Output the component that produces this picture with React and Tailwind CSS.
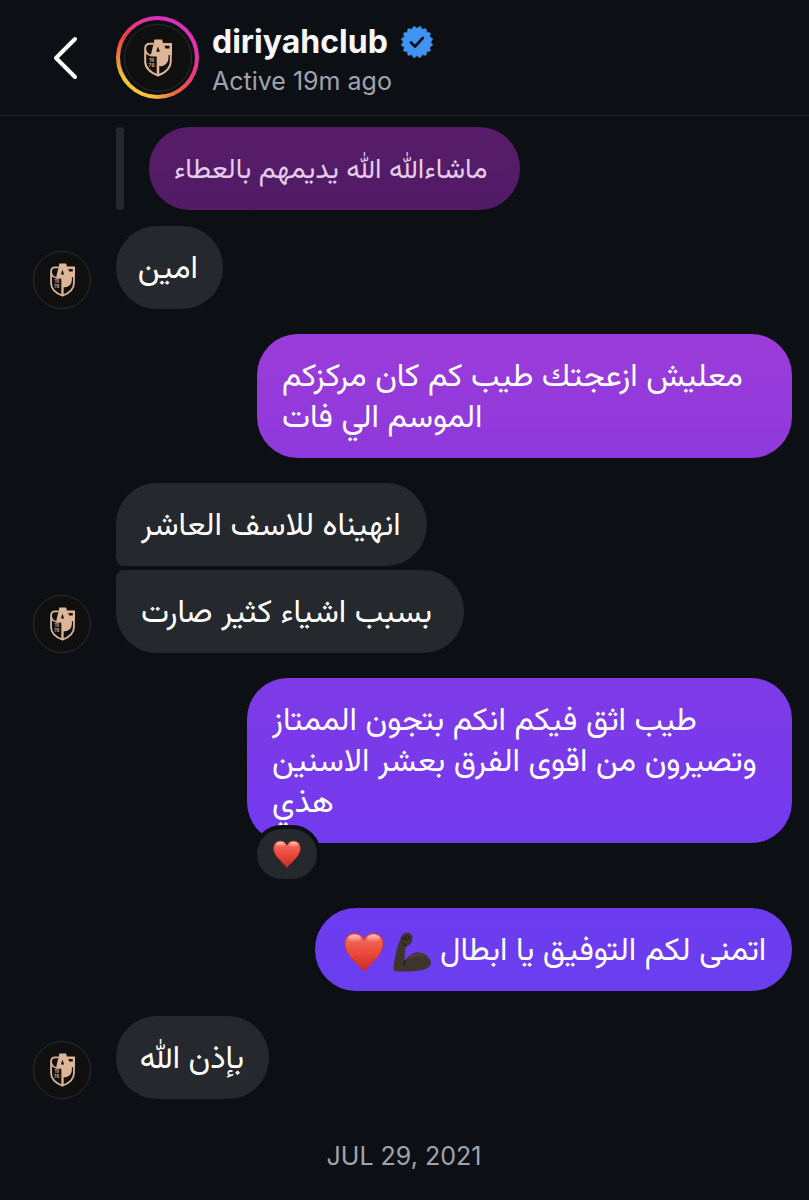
const ARABIC = "font-['Vazirmatn','DejaVu_Sans',sans-serif]";

// Messages of the thread, oldest first
const thread = [
  {
    id: 1,
    from: 'club',
    quote: 'ماشاءالله الله يديمهم بالعطاء',
    quoteSize: 'w-[371px]',
    items: [{ text: 'امين', size: 'w-[107px]' }],
    gap: 'mt-4',
  },
  {
    id: 2,
    from: 'me',
    items: [{
      text: 'معليش ازعجتك طيب كم كان مركزكم\nالموسم الي فات',
      size: 'w-[535px]',
      tone: 'from-[#9b3cd9] to-[#8e39dc]',
    }],
    gap: 'mt-[25px]',
  },
  {
    id: 3,
    from: 'club',
    items: [
      { text: 'انهيناه للاسف العاشر', size: 'w-[311px]' },
      { text: 'بسبب اشياء كثير صارت', size: 'w-[348px]' },
    ],
    gap: 'mt-[25px]',
  },
  {
    id: 4,
    from: 'me',
    items: [{
      text: 'طيب اثق فيكم انكم بتجون الممتاز\nوتصيرون من اقوى الفرق بعشر الاسنين\nهذي',
      size: 'w-[545px]',
      tone: 'from-[#7f3ae6] to-[#723aef]',
      reaction: true,
    }],
    gap: 'mt-[25px]',
  },
  {
    id: 5,
    from: 'me',
    items: [{
      text: 'اتمنى لكم التوفيق يا ابطال',
      size: 'w-[477px]',
      tone: 'from-[#6d3cf0] to-[#6a3eee]',
      emojis: true,
    }],
    gap: 'mt-[65px]',
  },
  {
    id: 6,
    from: 'club',
    items: [{ text: 'بإذن الله', size: 'w-[153px]' }],
    gap: 'mt-[25px]',
  },
];

function Heart({ className }) {
  return (
    <svg viewBox="0 0 40 40" className={className} role="img" aria-label="red heart">
      <defs>
        <linearGradient id="heartFill" x1="0" y1="0" x2="0" y2="1">
          <stop offset="0" stopColor="#f4705f" />
          <stop offset="0.45" stopColor="#ee4f40" />
          <stop offset="1" stopColor="#c9281f" />
        </linearGradient>
        <linearGradient id="heartShine" x1="0" y1="0" x2="0" y2="1">
          <stop offset="0" stopColor="#fff" stopOpacity="0.6" />
          <stop offset="1" stopColor="#fff" stopOpacity="0" />
        </linearGradient>
      </defs>
      <path d="M20 39.500C17 35.500 11 30.500 7 25.500C3.500 21 1 17 1 12C1 5.500 5 1.500 10.500 1.500C15 1.500 18.500 4 20 8C21.500 4 25 1.500 29.500 1.500C35 1.500 39 5.500 39 12C39 17 36.500 21 33 25.500C29 30.500 23 35.500 20 39.500Z" fill="url(#heartFill)" stroke="#c9342b" strokeWidth="0.8" />
      <ellipse cx="10.500" cy="6.500" rx="6.500" ry="4" fill="url(#heartShine)" />
      <ellipse cx="29.500" cy="6.500" rx="6.500" ry="4" fill="url(#heartShine)" />
    </svg>
  );
}

function Biceps({ className }) {
  return (
    <svg viewBox="0 0 40 40" className={className} role="img" aria-label="flexed biceps">
      <path d="M2 39C1 35 2.500 29 3.500 23C4.500 17 6.500 11 8.500 7C9.500 3 12 0.500 15 0.800C18.500 0.500 21 3 20.500 7C20.500 10.500 18 13.500 14.500 14C12.500 18 12.500 24 13 28.500C17 23 23 19.500 28 20.500C34 21.500 39 26.500 39 31C38.500 36 32 38.500 24 39C16 40 7 39.500 2 39Z" fill="#3f352f" />
      <path d="M13 28.500C12.800 30.500 13 31.500 11.500 33M10 6.500C12 5 13.500 6 15 8M15.500 3.500L17.500 6.500M14.500 14C12.500 13.500 11.500 12 11 11" fill="none" stroke="#211a16" strokeWidth="1.200" strokeLinecap="round" />
      <path d="M18 25.500C22 22.500 27 22 31 24" fill="none" stroke="#51453e" strokeWidth="1.500" strokeLinecap="round" />
    </svg>
  );
}

function Crest({ className }) {
  return (
    <svg viewBox="0 0 28 38" className={className} aria-hidden="true">
      <path d="M9.500 4.800H6C3 4.800 1.200 6.500 1.200 9.500V22.500C1.200 29.500 7.500 34 14 36.500C20.500 34 26.800 29.500 26.800 22.500V15" fill="none" stroke="#dcb696" strokeWidth="2" />
      <path d="M1.500 11C2 14 3.500 15.800 7 16.300" fill="none" stroke="#dcb696" strokeWidth="1.600" />
      <path fillRule="evenodd" d="M10.500 0.500H18L19 4H28V16H24.500V18.500C24.500 23.500 21.500 26.700 17 27.200L15.300 27V36.500H12.700V17.500H6.500ZM14 7.500L15.800 12.800H12.200ZM20.500 6.800H25.500V9.500H21.500Z" fill="#dcb696" />
      <text x="7.600" y="22.500" textAnchor="middle" fontSize="5" fontWeight="600" fill="#dcb696">19</text>
      <text x="7.600" y="27.500" textAnchor="middle" fontSize="5" fontWeight="600" fill="#dcb696">76</text>
    </svg>
  );
}

function Avatar() {
  return (
    <div className="flex h-[58px] w-[58px] shrink-0 items-center justify-center rounded-full border border-[#2e2d2d] bg-[#100f0f]">
      <Crest className="h-[34px] w-[25px]" />
    </div>
  );
}

function VerifiedBadge() {
  const points = Array.from({ length: 32 }, (_, i) => {
    const r = i % 2 ? 13.6 : 16;
    const a = ((i + 1) * Math.PI) / 16;
    return `${16 + r * Math.sin(a)},${16 - r * Math.cos(a)}`;
  }).join(' ');
  return (
    <svg viewBox="0 0 32 32" className="h-8 w-8" role="img" aria-label="Verified">
      <polygon points={points} fill="#4094f4" stroke="#4094f4" strokeWidth="0.800" strokeLinejoin="round" />
      <path d="M10 16.500L14 20.500L21.800 12" fill="none" stroke="#0c1014" strokeWidth="2.600" strokeLinecap="round" strokeLinejoin="round" />
    </svg>
  );
}

function Bubble({ item, mine, corners }) {
  return (
    <div className={`relative max-w-full rounded-[41px] px-[25px] pt-6 pb-[18px] text-white ${item.size} ${corners} ${mine ? `bg-linear-to-b ${item.tone}` : 'bg-[#25282d]'}`}>
      <p dir="rtl" className={`whitespace-pre text-left text-[32px] leading-[41px] ${ARABIC}`}>
        {item.text}
        {item.emojis && (
          <>
            <Biceps className="mr-2 inline-block h-10 w-10 align-middle" />
            <Heart className="mr-2 ml-1 inline-block h-10 w-10 align-middle" />
          </>
        )}
      </p>
      {item.reaction && (
        <button type="button" className="absolute -bottom-10 left-[6px] flex h-[58px] w-[68px] items-center justify-center rounded-full border-4 border-[#0c1014] bg-[#25282d]">
          <Heart className="h-7 w-7" />
        </button>
      )}
    </div>
  );
}

function MessageGroup({ group }) {
  if (group.from === 'me') {
    return (
      <div className={`flex justify-end ${group.gap}`}>
        <Bubble item={group.items[0]} mine corners="" />
      </div>
    );
  }

  const stacked = group.items.length > 1;
  return (
    <div className={`flex items-end gap-[25px] ${group.gap}`}>
      <Avatar />
      <div className="flex min-w-0 flex-col items-start gap-1">
        {group.items.map((item, i) => (
          <Bubble
            key={item.text}
            item={item}
            corners={!stacked ? '' : i === 0 ? 'rounded-bl-lg' : 'rounded-tl-lg'}
          />
        ))}
      </div>
    </div>
  );
}

export default function App() {
  return (
    <div className="min-h-screen bg-[#0c1014] font-['Inter',sans-serif]">
      <header className="flex h-[116px] items-center border-b border-[#1e2227] pl-[52px]">
        <button type="button" aria-label="Back" className="mr-[38px] shrink-0">
          <svg viewBox="0 0 26 44" className="h-11 w-[26px]" fill="none" stroke="#fff" strokeWidth="4" strokeLinecap="round" strokeLinejoin="round">
            <path d="M23 3L4 22L23 41" />
          </svg>
        </button>
        <div className="flex h-[83px] w-[83px] shrink-0 items-center justify-center rounded-full bg-[conic-gradient(from_0deg,#d92fc4,#e32fb4_20%,#ee3a78_33%,#f2603f_42%,#f8bd3c_52%,#f9c63c_66%,#f08234_75%,#e8413f_84%,#e035a0_94%,#d92fc4)]">
          <div className="flex h-[75px] w-[75px] items-center justify-center rounded-full bg-[#0c1014]">
            <div className="flex h-[68px] w-[68px] items-center justify-center rounded-full border border-[#2b2b2d] bg-[#100f0f]">
              <Crest className="h-[38px] w-7" />
            </div>
          </div>
        </div>
        <div className="ml-[13px] pt-1">
          <div className="flex items-center gap-[13px]">
            <h1 className="text-[32px] font-bold leading-[42px] text-[#f7f7f8]">diriyahclub</h1>
            <VerifiedBadge />
          </div>
          <p className="text-[25px] leading-9 text-[#a0a3ad]">Active 19m ago</p>
        </div>
      </header>

      <main className="pl-[33px] pr-[17px] pt-[11px]">
        <blockquote className="ml-[83px] flex gap-[25px]">
          <span className="w-2 shrink-0 rounded-full bg-[#25282d]" />
          <div className={`max-w-full rounded-[41px] bg-linear-to-b from-[#571c68] to-[#511b66] px-[25px] pt-6 pb-[18px] ${thread[0].quoteSize}`}>
            <p dir="rtl" className={`whitespace-pre text-left text-[28px] leading-[41px] text-[#e3cdea] ${ARABIC}`}>{thread[0].quote}</p>
          </div>
        </blockquote>
        {thread.map((group) => (
          <MessageGroup key={group.id} group={group} />
        ))}
        <p className="mt-[37px] pr-[17px] pb-6 text-center text-[25px] leading-10 text-[#a0a3ad]">JUL 29, 2021</p>
      </main>
    </div>
  );
}
